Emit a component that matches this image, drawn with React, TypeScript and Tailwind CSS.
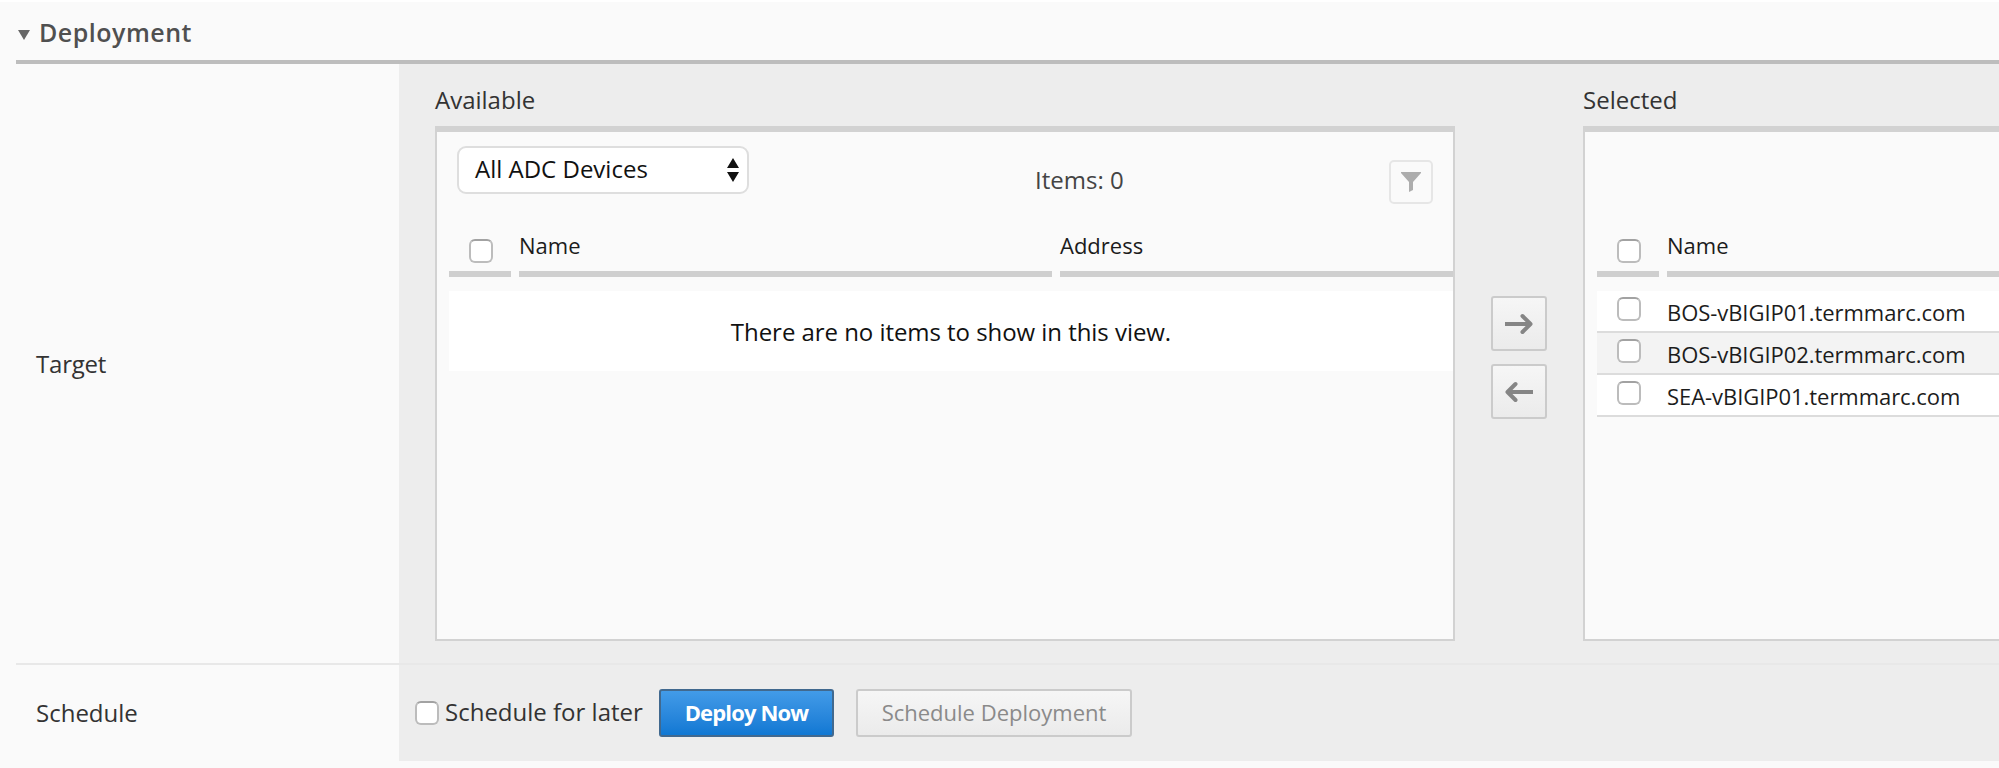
import React from "react";

const devices = [
  "BOS-vBIGIP01.termmarc.com",
  "BOS-vBIGIP02.termmarc.com",
  "SEA-vBIGIP01.termmarc.com",
];

function Checkbox({ className = "" }: { className?: string }) {
  return (
    <span
      role="checkbox"
      aria-checked="false"
      className={`block h-6 w-6 shrink-0 rounded-[6px] border-2 border-[#bcbcbc] border-t-[#a2a2a2] bg-white ${className}`}
    />
  );
}

function HeaderCell({ label, className }: { label: string; className: string }) {
  return (
    <div className={`h-[47px] border-b-[6px] border-[#cfcfcf] text-[22px] leading-[30px] text-[#1c1c1c] ${className}`}>
      {label}
    </div>
  );
}

function CheckHeader() {
  return (
    <div className="h-[47px] w-[62px] shrink-0 border-b-[6px] border-[#cfcfcf] pl-5 pt-[9px]">
      <Checkbox />
    </div>
  );
}

function MoveButton({ left = false }: { left?: boolean }) {
  return (
    <button className="flex h-[55px] w-[56px] items-center justify-center rounded-[3px] border-2 border-[#cbcbcb] bg-gradient-to-b from-[#f6f6f6] to-[#ebebeb]">
      <svg width="28" height="22" viewBox="0 0 28 22" fill="none" stroke="#858585" strokeWidth="4" className={left ? "-scale-x-100" : ""}>
        <path d="M0 11H25" />
        <path d="M17.5 3L25.5 11L17.5 19" strokeLinecap="round" strokeLinejoin="round" />
      </svg>
    </button>
  );
}

export default function App() {
  return (
    <div className="h-[768px] w-[1999px] overflow-hidden border-t-2 border-white bg-[#fafafa] pl-4 font-['Open_Sans','Noto_Sans',sans-serif] text-[#333]">
      <header className="flex h-[62px] items-center border-b-4 border-[#bdbdbd]">
        <svg width="12" height="10" viewBox="0 0 12 10" className="ml-[2px] mt-[7px]">
          <path d="M0 0H12L6 10Z" fill="#666" />
        </svg>
        <h1 className="ml-[9px] mt-px text-[25px] font-semibold leading-[32px] tracking-[0.5px] text-[#505050]">Deployment</h1>
      </header>

      <section className="flex h-[601px] border-b-2 border-[#e8e8e8]">
        <div className="flex w-[383px] shrink-0 items-center pl-5 text-[24px] leading-8 tracking-[-0.2px]">Target</div>
        <div className="flex flex-1 overflow-hidden bg-[#ededed] pl-9 pt-5">
          <div className="w-[1020px] shrink-0">
            <h2 className="h-[42px] text-[24px] leading-[32px]">Available</h2>
            <div className="h-[515px] border-2 border-t-[6px] border-[#d2d2d2] bg-[#fafafa]">
              <div className="flex h-[98px]">
                <button className="ml-[20px] mt-[14px] flex h-[48px] w-[292px] items-center justify-between rounded-[9px] border-2 border-[#dedede] bg-white pl-[16px] pr-[8px] text-[24px] leading-8 text-[#111]">
                  <span className="-mt-[3px]">All ADC Devices</span>
                  <svg width="12" height="24" viewBox="0 0 12 24" fill="#111">
                    <path d="M6 0L12 10H0Z M0 14H12L6 24Z" />
                  </svg>
                </button>
                <span className="ml-[286px] mt-[32px] text-[24px] leading-[32px] text-[#444]">Items: 0</span>
                <button className="ml-auto mr-[20px] mt-[28px] flex h-11 w-11 items-center justify-center rounded-[5px] border-2 border-[#e6e6e6]">
                  <svg width="20" height="20" viewBox="0 0 20 20" className="-mt-px">
                    <path d="M0 0H20V1L12 10V18L8 20V10L0 1Z" fill="#adadad" />
                  </svg>
                </button>
              </div>
              <div className="ml-3 flex gap-2">
                <CheckHeader />
                <HeaderCell label="Name" className="w-[533px]" />
                <HeaderCell label="Address" className="flex-1" />
              </div>
              <div className="ml-3 mt-[14px] flex h-[80px] items-center justify-center bg-white pt-px text-[24px] tracking-[-0.05px] text-[#111]">
                There are no items to show in this view.
              </div>
            </div>
          </div>

          <div className="flex w-[128px] shrink-0 flex-col items-center gap-[13px] pt-[212px]">
            <MoveButton />
            <MoveButton left />
          </div>

          <div className="w-[1020px] shrink-0">
            <h2 className="h-[42px] text-[24px] leading-[32px]">Selected</h2>
            <div className="h-[515px] border-2 border-t-[6px] border-[#d2d2d2] bg-[#fafafa]">
              <div className="ml-3 mt-[98px] flex gap-2">
                <CheckHeader />
                <HeaderCell label="Name" className="flex-1" />
              </div>
              <ul className="ml-3 mt-[14px]">
                {devices.map((name, i) => (
                  <li key={name} className={`flex h-[42px] border-b-2 border-[#dcdcdc] pl-5 ${i % 2 ? "bg-[#f3f3f3]" : "bg-white"}`}>
                    <Checkbox className="mt-[6px]" />
                    <span className="ml-[26px] mt-[5px] text-[22px] leading-[32px] tracking-[-0.05px] text-[#1c1c1c]">{name}</span>
                  </li>
                ))}
              </ul>
            </div>
          </div>
        </div>
      </section>

      <section className="flex h-[96px]">
        <div className="w-[383px] shrink-0 pl-5 pt-[32px] text-[24px] leading-8">Schedule</div>
        <div className="flex flex-1 bg-[#ededed] pl-4 pt-6">
          <Checkbox className="mt-3" />
          <span className="ml-[6px] mt-[7px] w-[214px] text-[24px] leading-8">Schedule for later</span>
          <button className="h-[48px] w-[175px] rounded-[3px] border-2 border-[#41698f] bg-gradient-to-b from-[#429be8] to-[#0f78d3] pb-px text-[22px] font-bold tracking-[-0.85px] text-white">
            Deploy Now
          </button>
          <button className="ml-[22px] h-[48px] w-[276px] rounded-[3px] border-2 border-[#cbcbcb] bg-gradient-to-b from-[#f6f6f6] to-[#ebebeb] pb-px text-[22px] text-[#8a8a8a]">
            Schedule Deployment
          </button>
        </div>
      </section>
    </div>
  );
}
